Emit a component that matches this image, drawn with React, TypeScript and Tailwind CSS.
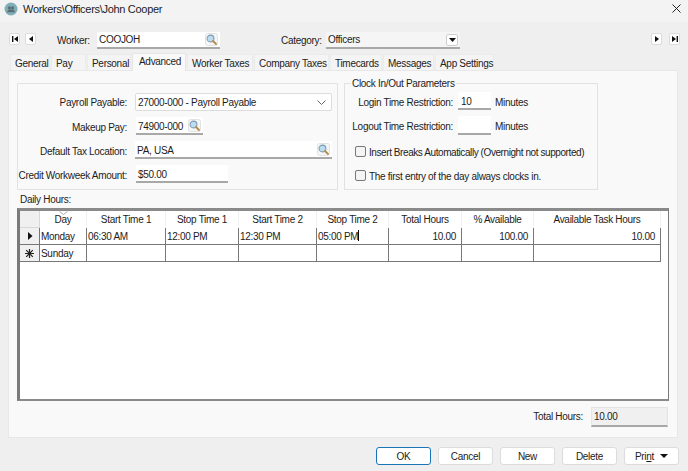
import React from "react";

const Search = () => (
  <svg width="13" height="13" viewBox="0 0 13 13" className="shrink-0">
    <rect x="0.5" y="0.5" width="12" height="12" rx="2" fill="#f4f6f7" stroke="#e2e2e2" />
    <circle cx="5.5" cy="5.5" r="3.4" fill="#bcdcf0" stroke="#7f9bb0" strokeWidth="1.1" />
    <path d="M8 8l3 3" stroke="#b98a4a" strokeWidth="1.8" strokeLinecap="round" />
  </svg>
);

const Nav = ({ kind }: { kind: "first" | "prev" | "next" | "last" }) => (
  <div className="w-[11px] h-[12px] bg-white border border-[#dcdcdc] rounded-[2px] flex items-center justify-center">
    <svg width="8" height="8" viewBox="0 0 8 8">
      {kind === "first" && <path d="M1 1h1.4v6H1zM7 1v6L3 4z" fill="#111" />}
      {kind === "prev" && <path d="M6 1v6L2 4z" fill="#111" />}
      {kind === "next" && <path d="M2 1v6l4-3z" fill="#111" />}
      {kind === "last" && <path d="M1 1v6l4-3zM5.6 1H7v6H5.6z" fill="#111" />}
    </svg>
  </div>
);

const Tab = ({ w, label, active }: { w: string; label: string; active?: boolean }) =>
  active ? (
    <div className={`${w} h-[18px] bg-[#f9f9f9] border-x border-t border-[#e6e6e6] pl-[6px] leading-[16px] relative z-10 -mb-px`}>{label}</div>
  ) : (
    <div className={`${w} h-[16px] bg-[#f4f4f4] border-x border-t border-[#ebebeb] pl-[4px] leading-[18px] text-[#222]`}>{label}</div>
  );

const Label = ({ children }: { children: React.ReactNode }) => (
  <span className="w-[108px] shrink-0 flex justify-end whitespace-nowrap pt-[2px]">{children}</span>
);

const Field = ({ className, children }: { className: string; children?: React.ReactNode }) => (
  <div className={`${className} bg-white border-b-2 border-[#a8a8a8] flex items-center pl-[2px] pr-[2px] justify-between whitespace-nowrap`}>{children}</div>
);

const cols = "grid grid-cols-[47px_79px_73px_78px_72px_73px_72px_127px]";

const Cell = ({ children, right }: { children?: React.ReactNode; right?: boolean }) => (
  <div className={`border-r border-b border-[#777] h-[17px] leading-[18px] px-[1px] whitespace-nowrap ${right ? "text-right pr-[5px]" : ""}`}>{children}</div>
);

const Head = ({ children }: { children: React.ReactNode }) => (
  <div className="h-[17px] leading-[18px] text-center border-r border-[#f0f0f0] whitespace-nowrap">{children}</div>
);

const Btn = ({ children, primary }: { children: React.ReactNode; primary?: boolean }) => (
  <div className={`w-[55px] h-[18px] bg-white rounded-[3px] flex items-center justify-center ${primary ? "border border-[#1a74b8]" : "border border-[#dcdcdc]"}`}>{children}</div>
);

const Check = ({ label, tight }: { label: string; tight?: boolean }) => (
  <div className="flex items-center gap-[3px] whitespace-nowrap">
    <div className="w-[11px] h-[11px] shrink-0 bg-[#f4f4f4] border border-[#777] rounded-[2px]" />
    <span className={`pt-[2px] ${tight ? "tracking-[-0.42px]" : ""}`}>{label}</span>
  </div>
);

export default function App() {
  return (
    <div className="w-[688px] h-[471px] bg-[#efefef] overflow-hidden flex flex-col text-[10px] tracking-[-0.3px] text-[#1c1c1c] [font-family:Liberation_Sans,sans-serif]">
      {/* Title bar */}
      <div className="h-[22px] bg-[#f3f3f3] flex items-center pl-[4px] pr-[7px] pb-[5px] shrink-0">
        <svg width="14" height="14" viewBox="0 0 14 14" className="mr-[5px]">
          <circle cx="7" cy="7" r="6.5" fill="#7fb0b8" />
          <circle cx="5.4" cy="5.8" r="1.6" fill="#5d6d75" />
          <circle cx="8.6" cy="5.8" r="1.6" fill="#5d6d75" />
          <path d="M3.2 10.2c0-2 1.2-2.8 2.2-2.8h3.2c1 0 2.2.8 2.2 2.8z" fill="#5d6d75" />
        </svg>
        <span className="leading-none flex-1 text-[11px] pt-[2px]">Workers\Officers\John Cooper</span>
        <svg width="9" height="9" viewBox="0 0 9 9">
          <path d="M.5.5l8 8M8.5.5l-8 8" stroke="#222" strokeWidth="1" />
        </svg>
      </div>

      {/* Record row */}
      <div className="h-[17px] mt-[10px] flex items-center pl-[9px] pr-[8px] shrink-0">
        <div className="flex gap-[5px] -mt-[4px]">
          <Nav kind="first" />
          <Nav kind="prev" />
        </div>
        <span className="ml-[21px] w-[40px]">Worker:</span>
        <Field className="w-[123px] h-[17px]">
          <span>COOJOH</span>
          <Search />
        </Field>
        <span className="ml-[61px] w-[45px] whitespace-nowrap">Category:</span>
        <div className="w-[134px] h-[17px] bg-[#f5f5f5] border-b-2 border-[#a8a8a8] flex items-center justify-between pl-[2px] pr-[2px]">
          <span>Officers</span>
          <div className="w-[12px] h-[12px] bg-white border border-[#cfcfcf] rounded-[2px] flex items-center justify-center">
            <svg width="7" height="4" viewBox="0 0 7 4"><path d="M0 0h7L3.5 4z" fill="#111" /></svg>
          </div>
        </div>
        <div className="ml-auto flex gap-[7px] -mt-[4px]">
          <Nav kind="next" />
          <Nav kind="last" />
        </div>
      </div>

      {/* Tabs */}
      <div className="mt-[3px] h-[18px] pl-[10px] flex items-end gap-[1px] shrink-0 whitespace-nowrap">
        <Tab w="w-[40px]" label="General" />
        <Tab w="w-[35px]" label="Pay" />
        <Tab w="w-[44px]" label="Personal" />
        <Tab w="w-[54px]" label="Advanced" active />
        <Tab w="w-[66px]" label="Worker Taxes" />
        <Tab w="w-[75px]" label="Company Taxes" />
        <Tab w="w-[52px]" label="Timecards" />
        <Tab w="w-[51px]" label="Messages" />
        <Tab w="w-[59px]" label="App Settings" />
      </div>

      {/* Panel */}
      <div className="ml-[8px] w-[670px] h-[368px] bg-[#f9f9f9] border border-[#e8e8e8] pt-[12px] pl-[8px] pr-[8px] shrink-0">
        <div className="flex gap-[6px] h-[107px]">
          {/* left group */}
          <div className="w-[321px] h-[107px] border border-[#e2e2e2] pt-[9px] pl-[1px] flex flex-col">
            <div className="flex items-center gap-[8px] h-[18px]">
              <span className="w-[108px] shrink-0 flex justify-end whitespace-nowrap">Payroll Payable:</span>
              <div className="w-[197px] h-[18px] bg-white border border-[#dcdcdc] rounded-[2px] flex items-center justify-between pl-[2px] pr-[5px]">
                <span>27000-000 - Payroll Payable</span>
                <svg width="9" height="5" viewBox="0 0 9 5"><path d="M.5.5l4 4 4-4" fill="none" stroke="#666" strokeWidth="1" /></svg>
              </div>
            </div>
            <div className="flex items-center gap-[9px] h-[18px] mt-[6px]">
              <Label>Makeup Pay:</Label>
              <Field className="w-[67px] h-[18px]">
                <span className="pt-[2px]">74900-000</span>
                <Search />
              </Field>
            </div>
            <div className="flex items-center gap-[8px] h-[18px] mt-[6px]">
              <Label>Default Tax Location:</Label>
              <Field className="w-[197px] h-[18px]">
                <span className="pt-[2px]">PA, USA</span>
                <Search />
              </Field>
            </div>
            <div className="flex items-center gap-[9px] h-[18px] mt-[6px]">
              <Label>Credit Workweek Amount:</Label>
              <Field className="w-[92px] h-[18px]">
                <span className="pt-[2px]">$50.00</span>
              </Field>
            </div>
          </div>

          {/* right group */}
          <div className="relative w-[254px] h-[107px] border border-[#e2e2e2] pt-[8px] flex flex-col">
            <div className="absolute left-[6px] top-[-7px] bg-[#f9f9f9] px-[1px] leading-[14px] whitespace-nowrap">Clock In/Out Parameters</div>
            <div className="flex items-center h-[18px]">
              <Label>Login Time Restriction:</Label>
              <Field className="w-[33px] h-[18px] ml-[5px] !pl-[3px]"><span className="pt-[2px]">10</span></Field>
              <span className="ml-[4px] pt-[2px]">Minutes</span>
            </div>
            <div className="flex items-center h-[19px] mt-[6px]">
              <Label>Logout Time Restriction:</Label>
              <Field className="w-[33px] h-[19px] ml-[5px]" />
              <span className="ml-[4px] pt-[2px]">Minutes</span>
            </div>
            <div className="pl-[10px] mt-[8px]"><Check tight label="Insert Breaks Automatically (Overnight not supported)" /></div>
            <div className="pl-[10px] mt-[7px]"><Check label="The first entry of the day always clocks in." /></div>
          </div>
        </div>

        <div className="pl-[3px] mt-[2px] h-[16px] leading-[16px]">Daily Hours:</div>

        {/* Table */}
        <div className="w-[652px] h-[193px] bg-white border-t-[3px] border-l-[3px] border-r border-b-2 border-t-[#8a8a8a] border-l-[#7a7a7a] border-r-[#7a7a7a] border-b-[#8a8a8a] flex">
          <div className="w-[20px] shrink-0">
            <div className="h-[17px] bg-[#f0f0f0] border-r border-b border-[#d8d8d8]" />
            <div className="h-[17px] bg-[#f0f0f0] border-r border-b border-[#777] flex items-center justify-center">
              <svg width="6" height="8" viewBox="0 0 6 8"><path d="M1 0v8l4.5-4z" fill="#111" /></svg>
            </div>
            <div className="h-[17px] bg-[#f0f0f0] border-r border-b border-[#777] flex items-center justify-center">
              <svg width="9" height="9" viewBox="0 0 9 9"><path d="M4.5 0v9M0 4.5h9M1.2 1.2l6.6 6.6M7.8 1.2l-6.6 6.6" stroke="#222" strokeWidth="1.2" /></svg>
            </div>
          </div>
          <div className="relative">
            <svg width="9" height="4" viewBox="0 0 9 4" className="absolute left-[19px] top-[0px]"><path d="M.5.5l4 3 4-3" fill="none" stroke="#aaa" /></svg>
            <div className={cols}>
              {["Day", "Start Time 1", "Stop Time 1", "Start Time 2", "Stop Time 2", "Total Hours", "% Available", "Available Task Hours"].map((h) => (
                <Head key={h}>{h}</Head>
              ))}
            </div>
            <div className={cols}>
              <Cell>Monday</Cell>
              <Cell>06:30 AM</Cell>
              <Cell>12:00 PM</Cell>
              <Cell>12:30 PM</Cell>
              <Cell>05:00 PM<span className="inline-block w-px h-[11px] bg-black align-[-1px]" /></Cell>
              <Cell right>10.00</Cell>
              <Cell right>100.00</Cell>
              <Cell right>10.00</Cell>
            </div>
            <div className={cols}>
              <Cell>Sunday</Cell>
              <Cell /><Cell /><Cell /><Cell /><Cell /><Cell /><Cell />
            </div>
          </div>
        </div>

        {/* Total */}
        <div className="flex justify-end items-center mt-[6px] pr-[1px]">
          <span className="mr-[8px] mb-[1px]">Total Hours:</span>
          <div className="w-[77px] h-[20px] bg-[#f0f0f0] border border-[#e4e4e4] border-b-2 border-b-[#a8a8a8] pl-[2px] leading-[17px]">10.00</div>
        </div>
      </div>

      {/* Buttons */}
      <div className="mt-[9px] flex justify-end gap-[7px] pr-[9px]">
        <Btn primary>OK</Btn>
        <Btn>Cancel</Btn>
        <Btn>New</Btn>
        <Btn>Delete</Btn>
        <Btn>
          <span className="flex items-center gap-[6px]">
            <span>Pri<span className="underline">n</span>t</span>
            <svg width="8" height="4" viewBox="0 0 8 4"><path d="M0 0h8L4 4z" fill="#111" /></svg>
          </span>
        </Btn>
      </div>
    </div>
  );
}
